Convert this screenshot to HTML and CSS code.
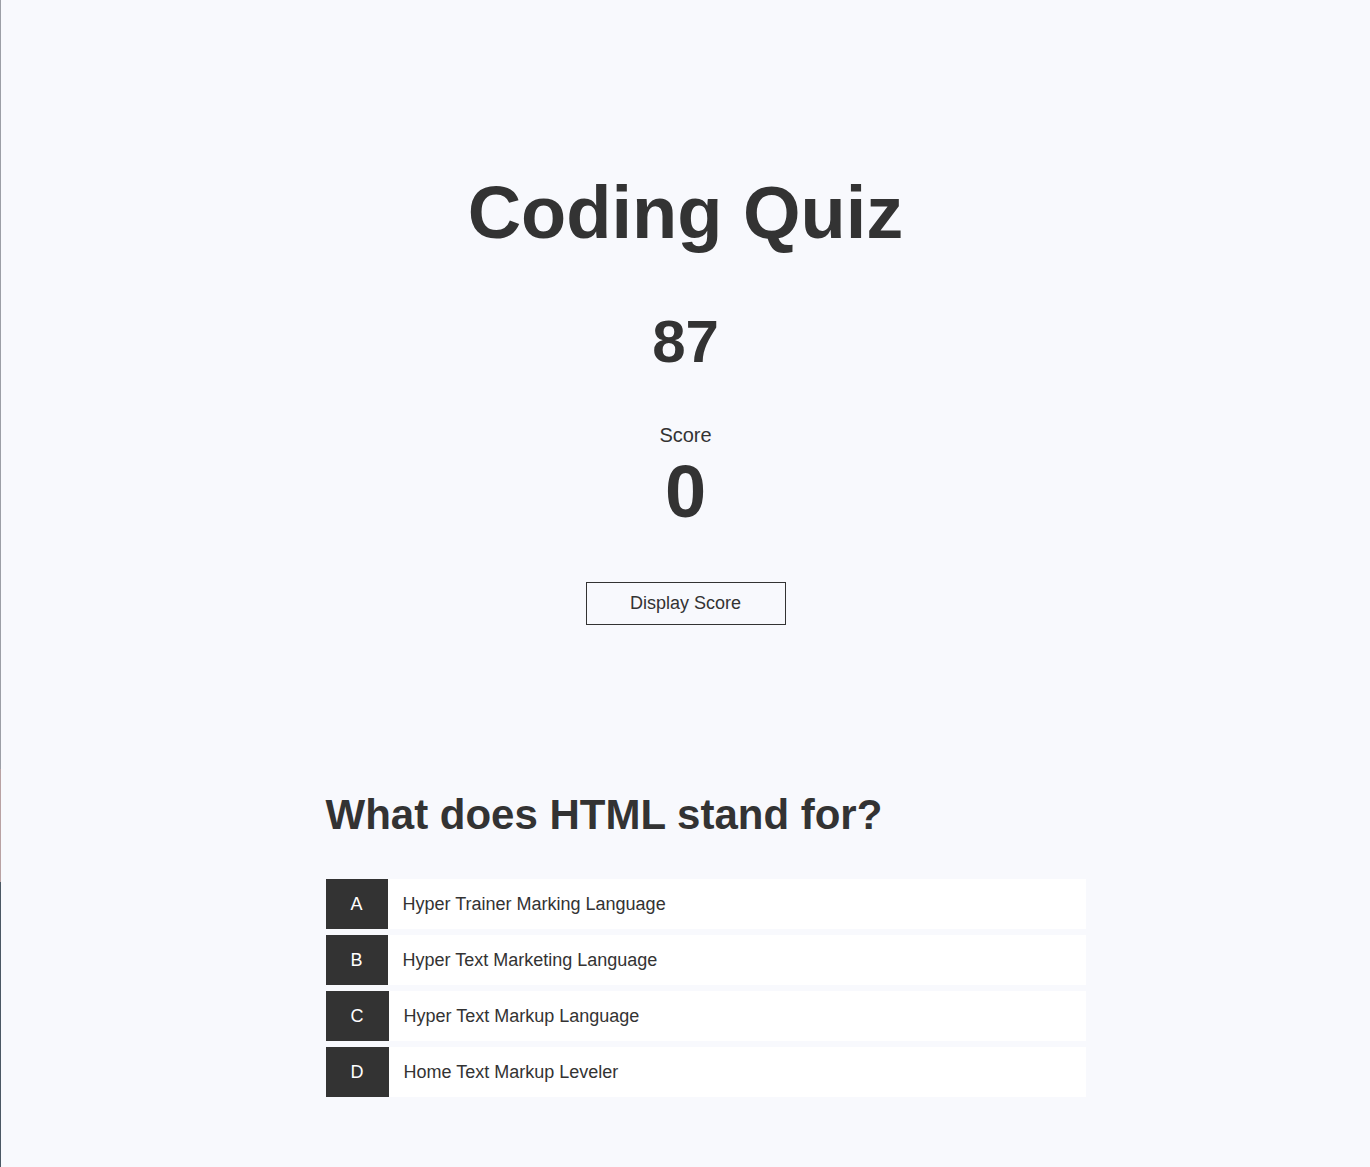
FILE: index.html
```html
<!DOCTYPE html>
<html lang="en">
<head>
<meta charset="utf-8">
<title>Coding Quiz</title>
<link rel="stylesheet" href="styles.css">
</head>
<body>
<div class="container">
  <header class="header">
    <h1 class="title">Coding Quiz</h1>
    <div class="timer">87</div>
    <div class="score-label">Score</div>
    <div class="score-value">0</div>
    <button class="score-btn" type="button">Display Score</button>
  </header>
  <section class="quiz">
    <h2 class="question">What does HTML stand for?</h2>
    <ul class="answers">
      <li class="answer"><span class="letter">A</span><span class="answer-text">Hyper Trainer Marking Language</span></li>
      <li class="answer"><span class="letter">B</span><span class="answer-text">Hyper Text Marketing Language</span></li>
      <li class="answer"><span class="letter wide">C</span><span class="answer-text">Hyper Text Markup Language</span></li>
      <li class="answer"><span class="letter wide">D</span><span class="answer-text">Home Text Markup Leveler</span></li>
    </ul>
  </section>
</div>
</body>
</html>
```

FILE: styles.css
```css
* { box-sizing: border-box; }

html, body {
  margin: 0;
  padding: 0;
}

body {
  min-height: 100vh;
  background: #f8f9fd;
  color: #333333;
  font-family: "Liberation Sans", Arial, sans-serif;
  border-left: 1px solid #9c9fa6;
  border-image: linear-gradient(to bottom, #9c9fa6 0, #9c9fa6 769px, #b9a2a3 769px, #b9a2a3 881px, #4b5864 881px, #4b5864 100%) 1;
}

.container {
  width: 800px;
  margin: 0 auto;
}

.header {
  display: flex;
  flex-direction: column;
  align-items: center;
  padding-top: 170px;
}

.title {
  margin: 0;
  font-size: 74px;
  line-height: 85px;
  font-weight: 700;
}

.timer {
  margin-top: 52px;
  font-size: 60px;
  line-height: 69px;
  font-weight: 700;
}

.score-label {
  margin-top: 48px;
  font-size: 20px;
  line-height: 23px;
}

.score-value {
  margin-top: 2px;
  font-size: 74px;
  line-height: 85px;
  font-weight: 700;
}

.score-btn {
  margin-top: 48px;
  width: 200px;
  height: 43px;
  border: 1px solid #333333;
  background: transparent;
  color: #333333;
  font-family: "Liberation Sans", Arial, sans-serif;
  font-size: 18px;
  padding: 0;
}

.quiz {
  padding-top: 166px;
}

.question {
  margin: 0 0 40px 40px;
  font-size: 42px;
  line-height: 48px;
  font-weight: 700;
}

.answers {
  list-style: none;
  margin: 0;
  padding: 0 0 0 40px;
  display: flex;
  flex-direction: column;
  gap: 6px;
}

.answer {
  display: flex;
  align-items: stretch;
  height: 50px;
  background: #ffffff;
}

.letter {
  width: 62px;
  background: #333333;
  color: #ffffff;
  font-size: 18px;
  display: flex;
  align-items: center;
  justify-content: center;
}

.letter.wide { width: 63px; }

.answer-text {
  display: flex;
  align-items: center;
  padding-left: 15px;
  font-size: 18px;
  color: #333333;
}
```
